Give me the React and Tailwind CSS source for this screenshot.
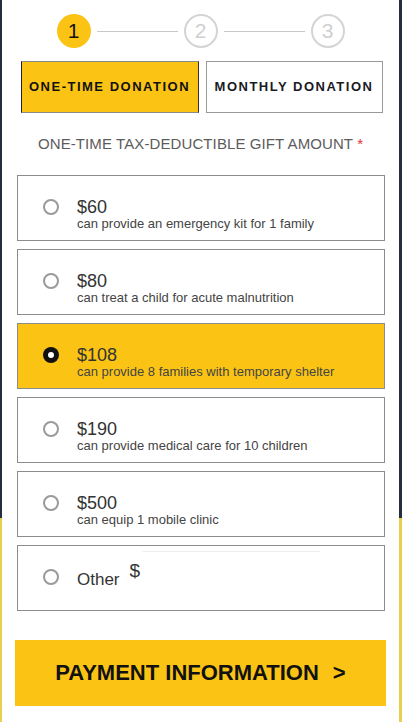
const options = [
  { amount: "$60", text: "can provide an emergency kit for 1 family" },
  { amount: "$80", text: "can treat a child for acute malnutrition" },
  { amount: "$108", text: "can provide 8 families with temporary shelter", selected: true },
  { amount: "$190", text: "can provide medical care for 10 children" },
  { amount: "$500", text: "can equip 1 mobile clinic" },
];

function Radio({ selected }) {
  if (selected) {
    return (
      <span className="flex h-[16px] w-[16px] shrink-0 items-center justify-center rounded-full bg-[#111]">
        <span className="h-[6px] w-[6px] rounded-full bg-white" />
      </span>
    );
  }
  return <span className="h-[16px] w-[16px] shrink-0 rounded-full border-2 border-[#9a9a9a] bg-white" />;
}

function Step({ n, active }) {
  if (active) {
    return (
      <div className="flex h-[34px] w-[34px] items-center justify-center rounded-full bg-[#fbc414] text-[21px] text-[#111]">
        {n}
      </div>
    );
  }
  return (
    <div className="flex h-[34px] w-[34px] items-center justify-center rounded-full border-2 border-[#d4d4d4] text-[21px] text-[#cfcfcf]">
      {n}
    </div>
  );
}

export default function App() {
  return (
    <div className="h-[722px] w-full bg-[linear-gradient(to_bottom,#262d3c_518px,#e9cf4f_518px)] pl-[2px] pr-[3px] font-['Liberation_Sans',Arial,sans-serif]">
      <div className="flex h-full flex-col bg-white">
        {/* Steps */}
        <div className="flex items-center justify-center pt-[14px]">
          <Step n="1" active />
          <div className="mx-[6px] h-[1px] w-[81px] bg-[#c8c8c8]" />
          <Step n="2" />
          <div className="mx-[6px] h-[1px] w-[81px] bg-[#c8c8c8]" />
          <Step n="3" />
        </div>

        {/* Donation type */}
        <div className="mt-[13px] flex justify-center gap-[7px] pl-[2px]">
          <button className="flex h-[52px] w-[178px] items-center justify-center border border-[#8a8a8a] border-l-[#222] border-r-[#333] bg-[#fbc414] text-[13px] font-bold tracking-[1.5px] text-[#111]">
            ONE-TIME DONATION
          </button>
          <button className="flex h-[52px] w-[177px] items-center justify-center border border-[#999] bg-white text-[13px] font-bold tracking-[1.5px] text-[#1a1a24]">
            MONTHLY DONATION
          </button>
        </div>

        <p className="mt-[20px] text-center text-[15px] tracking-[0.1px] text-[#5c5c5c]">
          ONE-TIME TAX-DEDUCTIBLE GIFT AMOUNT <span className="text-[#d33]">*</span>
        </p>

        {/* Amount options */}
        <div className="mx-auto mt-[19px] flex w-[369px] flex-col gap-[8px] pl-[1px]">
          {options.map((o) => (
            <div
              key={o.amount}
              className={`flex h-[66px] items-start border border-[#8c8c8c] pl-[25px] pt-[23px] ${o.selected ? "bg-[#fbc414]" : "bg-white"}`}
            >
              <Radio selected={o.selected} />
              <div className="ml-[18px] -mt-[2px] flex flex-col">
                <span className="text-[18px] leading-[20px] text-[#333]">{o.amount}</span>
                <span className="text-[13px] leading-[14px] text-[#444]">{o.text}</span>
              </div>
            </div>
          ))}
          <div className="flex h-[66px] items-start border border-[#8c8c8c] bg-white pl-[25px] pt-[23px]">
            <Radio />
            <span className="ml-[18px] mt-[1px] text-[17px] leading-[19px] text-[#333]">Other</span>
            <div className="-mt-[18px] ml-[10px] flex flex-col">
              <div className="ml-[13px] h-[1px] w-[177px] bg-[#eeeeee]" />
              <span className="mt-[9px] text-[19px] leading-[20px] text-[#333]">$</span>
            </div>
          </div>
        </div>

        {/* Submit */}
        <button className="mx-auto mt-[29px] flex h-[66px] w-[371px] items-center justify-center bg-[#fbc414] text-[22px] font-bold text-[#111]">
          PAYMENT INFORMATION <span className="ml-[14px]">&gt;</span>
        </button>
      </div>
    </div>
  );
}
